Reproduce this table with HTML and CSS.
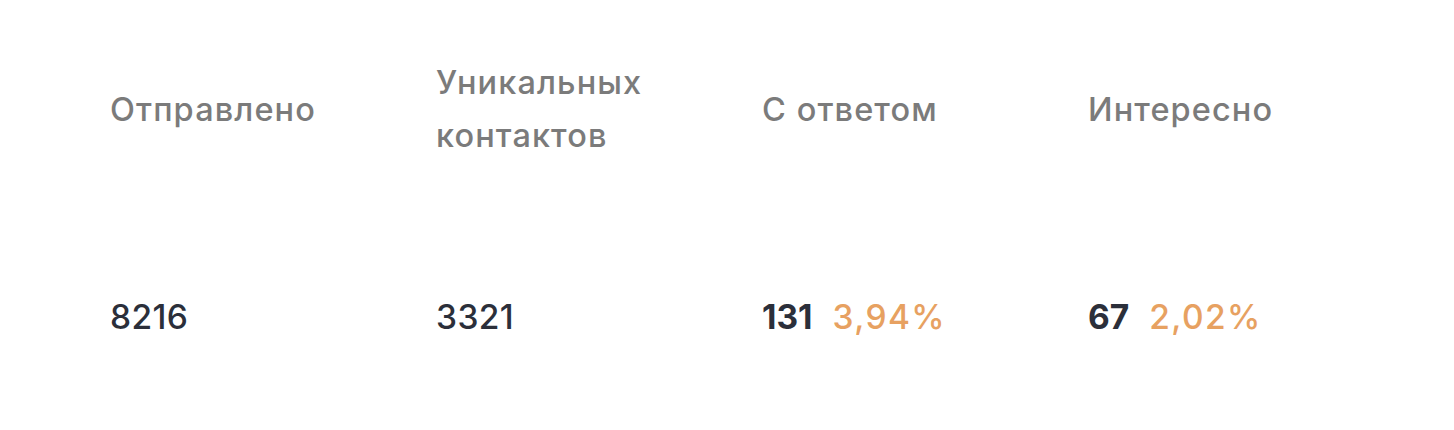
FILE: index.html
```html
<!DOCTYPE html>
<html lang="ru">
<head>
<meta charset="utf-8">
<link rel="stylesheet" href="styles.css">
</head>
<body>
<div class="stats">
  <div class="col">
    <div class="label">Отправлено</div>
    <div class="value"><span class="num">8216</span></div>
  </div>
  <div class="col">
    <div class="label">Уникальных<br>контактов</div>
    <div class="value"><span class="num">3321</span></div>
  </div>
  <div class="col">
    <div class="label">С ответом</div>
    <div class="value"><span class="num strong">131</span><span class="pct">3,94%</span></div>
  </div>
  <div class="col">
    <div class="label">Интересно</div>
    <div class="value"><span class="num strong">67</span><span class="pct">2,02%</span></div>
  </div>
</div>
</body>
</html>
```

FILE: styles.css
```css
html, body {
  margin: 0;
  padding: 0;
  background: #ffffff;
}
body {
  font-family: Inter, Roboto, "Noto Sans", sans-serif;
}
.stats {
  display: grid;
  grid-template-columns: repeat(4, 326px);
  padding: 56px 0 0 110px;
}
.col {
  display: flex;
  flex-direction: column;
}
.label {
  height: 106px;
  display: flex;
  align-items: center;
  font-size: 32.5px;
  line-height: 53px;
  font-weight: 500;
  letter-spacing: 1.1px;
  color: #7b7b7b;
}
.value {
  margin-top: 130px;
  height: 50px;
  display: flex;
  align-items: center;
  font-size: 33.5px;
  font-weight: 500;
  letter-spacing: 0.4px;
  color: #2b2f3a;
}
.num.strong {
  font-weight: 650;
  letter-spacing: 0;
}
.pct {
  margin-left: 20px;
  color: #e7a161;
  font-weight: 500;
  letter-spacing: 1.4px;
}
```
